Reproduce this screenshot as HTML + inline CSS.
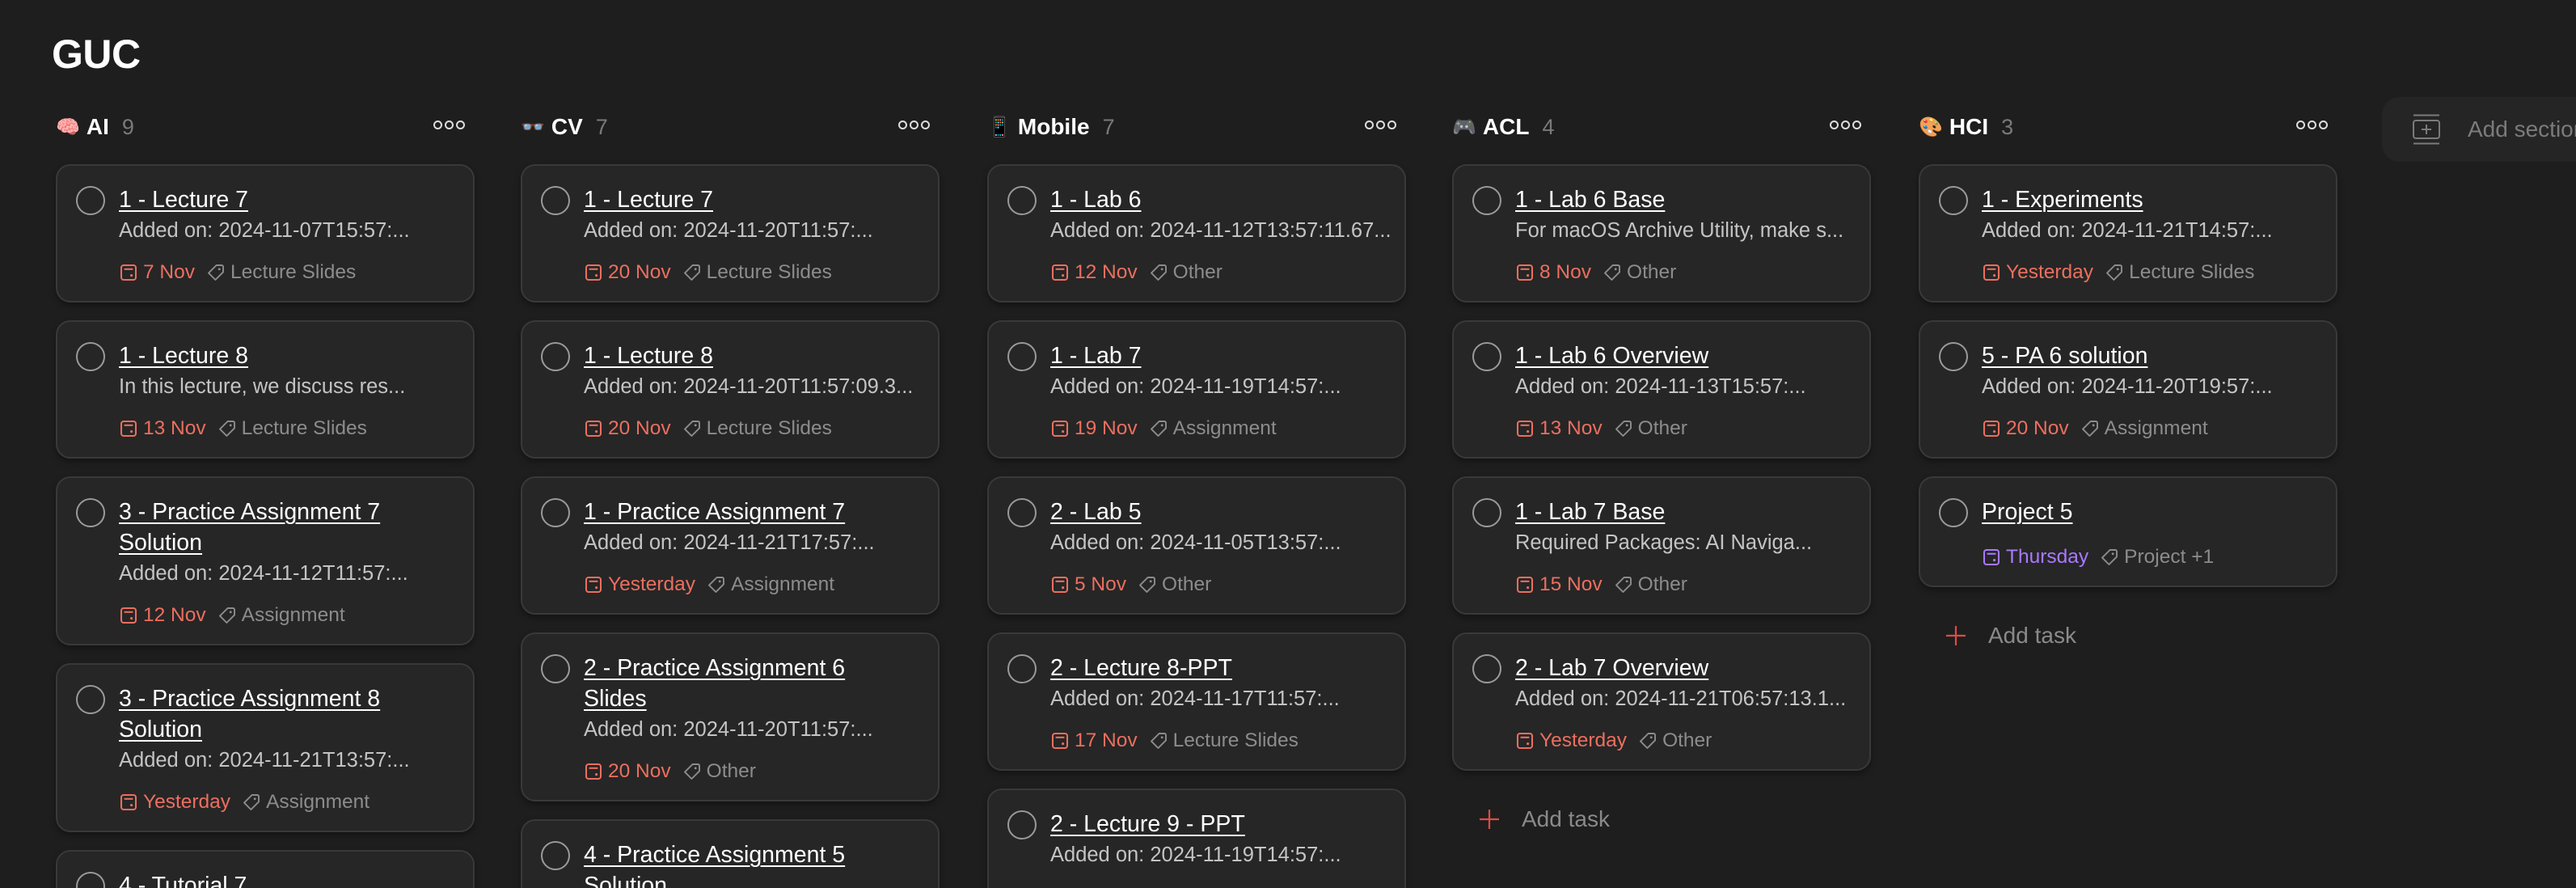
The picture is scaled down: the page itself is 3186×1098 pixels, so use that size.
<!DOCTYPE html>
<html><head><meta charset="utf-8">
<style>
*{box-sizing:border-box;margin:0;padding:0}
html,body{width:3186px;height:1098px;overflow:hidden;background:#1e1e1e;font-family:"Liberation Sans",sans-serif;color:#fff}
#wrap{position:relative;width:3186px;height:1098px;overflow:hidden}
h1{position:absolute;left:64px;top:38px;font-size:50px;font-weight:bold;letter-spacing:-0.5px}
.col{position:absolute;top:0;width:518px}
.hdr{position:absolute;top:138px;left:0;width:518px;height:38px;display:flex;align-items:center;font-size:28px;font-weight:bold}
.hdr .em{font-size:24px;margin-right:8px;font-family:"DejaVu Sans",sans-serif;font-weight:normal}
.hdr .n{color:#7a7a7a;font-weight:normal;margin-left:16px;font-size:27px}
.dots{position:absolute;right:12px;top:11px;display:flex;gap:3px}
.dots i{display:block;width:11px;height:11px;border:2px solid #ddd;border-radius:50%}
.cards{position:absolute;top:203px;left:0;width:518px}
.card{position:relative;background:#262626;border:2px solid #393939;border-radius:18px;margin-bottom:22px;padding:23px 10px 15px 76px;box-shadow:0 4px 8px rgba(0,0,0,.35)}
.card .c{position:absolute;left:23px;top:25px;width:36px;height:36px;border:2.5px solid #9a9a9a;border-radius:50%}
.t{font-size:28.5px;line-height:38px;text-decoration:underline;text-underline-offset:4px;text-decoration-thickness:2px;color:#fff}
.d{font-size:25.5px;line-height:38px;color:#c4c4c4;white-space:nowrap}
.m{margin-top:13px;height:40px;display:flex;align-items:center;font-size:24.5px;color:#8c8c8c;white-space:nowrap}
.m .dt{color:#ec6f5f;display:flex;align-items:center;margin-right:14px}
.m .dt.p{color:#a879ff}
.m svg{margin-right:6px}
.m .tg{display:flex;align-items:center}
.add{position:relative;height:50px;display:flex;align-items:center;font-size:28px;color:#8a8a8a;margin-top:35px}
.add svg{margin-left:33px;margin-right:27px}
.sec{position:absolute;left:2946px;top:120px;width:300px;height:80px;background:#252525;border-radius:22px;display:flex;align-items:center;font-size:28px;color:#7b7b7b}
.sec svg{margin-left:38px;margin-right:34px}
</style></head><body><div id="wrap">
<h1>GUC</h1>

<svg width="0" height="0" style="position:absolute">
<defs>
<symbol id="cal" viewBox="0 0 20 20"><rect x="2.5" y="2.5" width="15" height="15" rx="2.5" fill="none" stroke="currentColor" stroke-width="1.7"/><line x1="5.5" y1="6.5" x2="14.5" y2="6.5" stroke="currentColor" stroke-width="1.7"/><circle cx="13" cy="13" r="1.3" fill="currentColor"/></symbol>
<symbol id="tag" viewBox="0 0 20 20"><path d="M10.5 2.5 H16 a1.5 1.5 0 0 1 1.5 1.5 V9.5 L9.5 17.5 L2.5 10.5 Z" fill="none" stroke="currentColor" stroke-width="1.6" stroke-linejoin="round"/><circle cx="13.5" cy="6.5" r="1.2" fill="currentColor"/></symbol>
</defs></svg>

<!-- AI -->
<div class="col" style="left:69px">
<div class="hdr"><span class="em">🧠</span>AI<span class="n">9</span><div class="dots"><i></i><i></i><i></i></div></div>
<div class="cards">
<div class="card"><div class="c"></div><div class="t">1 - Lecture 7</div><div class="d">Added on: 2024-11-07T15:57:...</div><div class="m"><span class="dt"><svg width="24" height="24"><use href="#cal"/></svg>7 Nov</span><span class="tg"><svg width="24" height="24"><use href="#tag"/></svg>Lecture Slides</span></div></div>
<div class="card"><div class="c"></div><div class="t">1 - Lecture 8</div><div class="d">In this lecture, we discuss res...</div><div class="m"><span class="dt"><svg width="24" height="24"><use href="#cal"/></svg>13 Nov</span><span class="tg"><svg width="24" height="24"><use href="#tag"/></svg>Lecture Slides</span></div></div>
<div class="card"><div class="c"></div><div class="t">3 - Practice Assignment 7<br>Solution</div><div class="d">Added on: 2024-11-12T11:57:...</div><div class="m"><span class="dt"><svg width="24" height="24"><use href="#cal"/></svg>12 Nov</span><span class="tg"><svg width="24" height="24"><use href="#tag"/></svg>Assignment</span></div></div>
<div class="card"><div class="c"></div><div class="t">3 - Practice Assignment 8<br>Solution</div><div class="d">Added on: 2024-11-21T13:57:...</div><div class="m"><span class="dt"><svg width="24" height="24"><use href="#cal"/></svg>Yesterday</span><span class="tg"><svg width="24" height="24"><use href="#tag"/></svg>Assignment</span></div></div>
<div class="card"><div class="c"></div><div class="t">4 - Tutorial 7</div><div class="d">Added on: 2024-11-21T13:57:...</div><div class="m"></div></div>
</div></div>

<!-- CV -->
<div class="col" style="left:644px">
<div class="hdr"><span class="em">👓</span>CV<span class="n">7</span><div class="dots"><i></i><i></i><i></i></div></div>
<div class="cards">
<div class="card"><div class="c"></div><div class="t">1 - Lecture 7</div><div class="d">Added on: 2024-11-20T11:57:...</div><div class="m"><span class="dt"><svg width="24" height="24"><use href="#cal"/></svg>20 Nov</span><span class="tg"><svg width="24" height="24"><use href="#tag"/></svg>Lecture Slides</span></div></div>
<div class="card"><div class="c"></div><div class="t">1 - Lecture 8</div><div class="d">Added on: 2024-11-20T11:57:09.3...</div><div class="m"><span class="dt"><svg width="24" height="24"><use href="#cal"/></svg>20 Nov</span><span class="tg"><svg width="24" height="24"><use href="#tag"/></svg>Lecture Slides</span></div></div>
<div class="card"><div class="c"></div><div class="t">1 - Practice Assignment 7</div><div class="d">Added on: 2024-11-21T17:57:...</div><div class="m"><span class="dt"><svg width="24" height="24"><use href="#cal"/></svg>Yesterday</span><span class="tg"><svg width="24" height="24"><use href="#tag"/></svg>Assignment</span></div></div>
<div class="card"><div class="c"></div><div class="t">2 - Practice Assignment 6<br>Slides</div><div class="d">Added on: 2024-11-20T11:57:...</div><div class="m"><span class="dt"><svg width="24" height="24"><use href="#cal"/></svg>20 Nov</span><span class="tg"><svg width="24" height="24"><use href="#tag"/></svg>Other</span></div></div>
<div class="card"><div class="c"></div><div class="t">4 - Practice Assignment 5<br>Solution</div><div class="d">Added on</div><div class="m"></div></div>
</div></div>

<!-- Mobile -->
<div class="col" style="left:1221px">
<div class="hdr"><span class="em">📱</span>Mobile<span class="n">7</span><div class="dots"><i></i><i></i><i></i></div></div>
<div class="cards">
<div class="card"><div class="c"></div><div class="t">1 - Lab 6</div><div class="d">Added on: 2024-11-12T13:57:11.67...</div><div class="m"><span class="dt"><svg width="24" height="24"><use href="#cal"/></svg>12 Nov</span><span class="tg"><svg width="24" height="24"><use href="#tag"/></svg>Other</span></div></div>
<div class="card"><div class="c"></div><div class="t">1 - Lab 7</div><div class="d">Added on: 2024-11-19T14:57:...</div><div class="m"><span class="dt"><svg width="24" height="24"><use href="#cal"/></svg>19 Nov</span><span class="tg"><svg width="24" height="24"><use href="#tag"/></svg>Assignment</span></div></div>
<div class="card"><div class="c"></div><div class="t">2 - Lab 5</div><div class="d">Added on: 2024-11-05T13:57:...</div><div class="m"><span class="dt"><svg width="24" height="24"><use href="#cal"/></svg>5 Nov</span><span class="tg"><svg width="24" height="24"><use href="#tag"/></svg>Other</span></div></div>
<div class="card"><div class="c"></div><div class="t">2 - Lecture 8-PPT</div><div class="d">Added on: 2024-11-17T11:57:...</div><div class="m"><span class="dt"><svg width="24" height="24"><use href="#cal"/></svg>17 Nov</span><span class="tg"><svg width="24" height="24"><use href="#tag"/></svg>Lecture Slides</span></div></div>
<div class="card"><div class="c"></div><div class="t">2 - Lecture 9 - PPT</div><div class="d">Added on: 2024-11-19T14:57:...</div><div class="m"></div></div>
</div></div>

<!-- ACL -->
<div class="col" style="left:1796px">
<div class="hdr"><span class="em">🎮</span>ACL<span class="n">4</span><div class="dots"><i></i><i></i><i></i></div></div>
<div class="cards">
<div class="card"><div class="c"></div><div class="t">1 - Lab 6 Base</div><div class="d">For macOS Archive Utility, make s...</div><div class="m"><span class="dt"><svg width="24" height="24"><use href="#cal"/></svg>8 Nov</span><span class="tg"><svg width="24" height="24"><use href="#tag"/></svg>Other</span></div></div>
<div class="card"><div class="c"></div><div class="t">1 - Lab 6 Overview</div><div class="d">Added on: 2024-11-13T15:57:...</div><div class="m"><span class="dt"><svg width="24" height="24"><use href="#cal"/></svg>13 Nov</span><span class="tg"><svg width="24" height="24"><use href="#tag"/></svg>Other</span></div></div>
<div class="card"><div class="c"></div><div class="t">1 - Lab 7 Base</div><div class="d">Required Packages: AI Naviga...</div><div class="m"><span class="dt"><svg width="24" height="24"><use href="#cal"/></svg>15 Nov</span><span class="tg"><svg width="24" height="24"><use href="#tag"/></svg>Other</span></div></div>
<div class="card"><div class="c"></div><div class="t">2 - Lab 7 Overview</div><div class="d">Added on: 2024-11-21T06:57:13.1...</div><div class="m"><span class="dt"><svg width="24" height="24"><use href="#cal"/></svg>Yesterday</span><span class="tg"><svg width="24" height="24"><use href="#tag"/></svg>Other</span></div></div>
<div class="add"><svg width="26" height="26" viewBox="0 0 26 26"><path d="M13 1V25M1 13H25" stroke="#de4c45" stroke-width="2.2"/></svg>Add task</div>
</div></div>

<!-- HCI -->
<div class="col" style="left:2373px">
<div class="hdr"><span class="em">🎨</span>HCI<span class="n">3</span><div class="dots"><i></i><i></i><i></i></div></div>
<div class="cards">
<div class="card"><div class="c"></div><div class="t">1 - Experiments</div><div class="d">Added on: 2024-11-21T14:57:...</div><div class="m"><span class="dt"><svg width="24" height="24"><use href="#cal"/></svg>Yesterday</span><span class="tg"><svg width="24" height="24"><use href="#tag"/></svg>Lecture Slides</span></div></div>
<div class="card"><div class="c"></div><div class="t">5 - PA 6 solution</div><div class="d">Added on: 2024-11-20T19:57:...</div><div class="m"><span class="dt"><svg width="24" height="24"><use href="#cal"/></svg>20 Nov</span><span class="tg"><svg width="24" height="24"><use href="#tag"/></svg>Assignment</span></div></div>
<div class="card"><div class="c"></div><div class="t">Project 5</div><div class="m" style="margin-top:17px"><span class="dt p"><svg width="24" height="24"><use href="#cal"/></svg>Thursday</span><span class="tg"><svg width="24" height="24"><use href="#tag"/></svg>Project +1</span></div></div>
<div class="add"><svg width="26" height="26" viewBox="0 0 26 26"><path d="M13 1V25M1 13H25" stroke="#de4c45" stroke-width="2.2"/></svg>Add task</div>
</div></div>

<div class="sec"><svg width="34" height="38" viewBox="0 0 34 38"><line x1="1" y1="1.5" x2="33" y2="1.5" stroke="#7b7b7b" stroke-width="2"/><rect x="1" y="8" width="32" height="22" rx="3" fill="none" stroke="#7b7b7b" stroke-width="2"/><path d="M17 13V25M11 19H23" stroke="#7b7b7b" stroke-width="2"/><line x1="1" y1="36.5" x2="33" y2="36.5" stroke="#7b7b7b" stroke-width="2"/></svg>Add section</div>
</div></body></html>
